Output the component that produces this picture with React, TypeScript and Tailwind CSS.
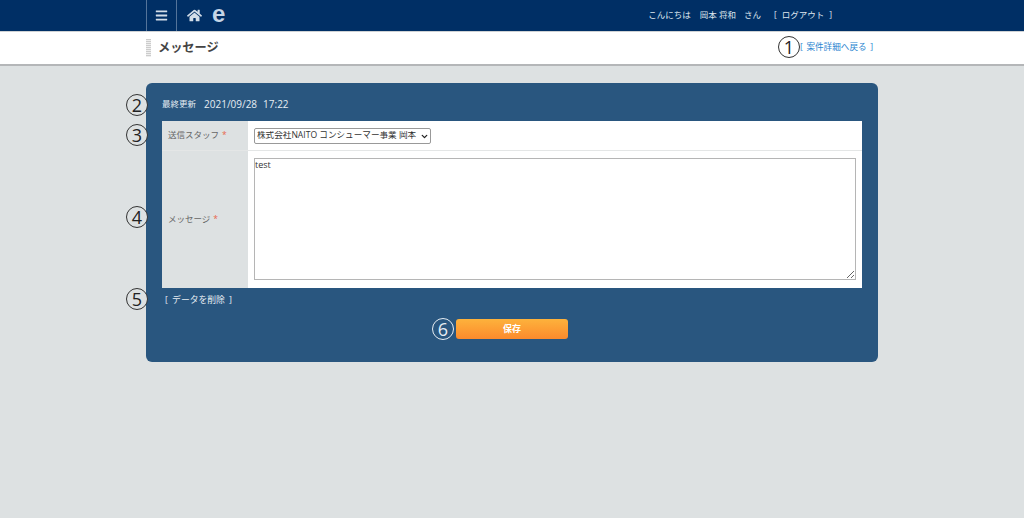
import { ChevronDown } from 'lucide-react';
import { FaBars, FaHome } from 'react-icons/fa';

const font = { fontFamily: '"Open Sans", "Noto Sans CJK JP", sans-serif' };

function Mark({ n, className }: { n: string; className: string }) {
    return (
        <span className={`absolute flex h-[22px] w-[22px] items-center justify-center rounded-full border text-[18px] leading-none ${className}`}>
            {n}
        </span>
    );
}

export default function App() {
    return (
        <div style={font} className="relative h-[518px] w-[1024px] overflow-hidden bg-[#dde1e2] font-['Open_Sans','Noto_Sans_CJK_JP',sans-serif]">
            {/* top bar */}
            <div className="h-[31px] bg-[#002f65]">
                <div className="mx-auto flex h-full w-[732px] items-center">
                    <div className="flex h-full w-[31px] items-center justify-center border-x border-[#54749a] text-[#d3dee9]">
                        <FaBars size={13} />
                    </div>
                    <FaHome size={15} className="ml-[10px] text-[#d3dee9]" />
                    <span className="ml-[10px] h-[28px] font-['Liberation_Sans',sans-serif] text-[24px] font-bold leading-[24px] text-[#c5d5e6]">e</span>
                    <div className="ml-auto mr-[46px] flex items-center text-[8.5px] text-[#dfe7ef]">
                        <span>こんにちは</span>
                        <span className="ml-[9px]">岡本 将和</span>
                        <span className="ml-[8px]">さん</span>
                        <div className="ml-[13px] flex w-[58px] justify-between">
                            <span>[</span>
                            <span>ログアウト</span>
                            <span>]</span>
                        </div>
                    </div>
                </div>
            </div>

            {/* title bar */}
            <div className="h-[35px] border-t border-b-2 border-t-[#cfd2d4] border-b-[#b4b6b8] bg-white">
                <div className="mx-auto flex h-full w-[732px] items-center">
                    <div className="h-[18px] w-[5px] bg-[repeating-linear-gradient(#ccc_0,#ccc_1px,#eee_1px,#eee_2px)]" />
                    <h1 className="ml-[7px] text-[12.2px] font-bold text-[#444]">メッセージ</h1>
                    <a className="ml-auto mr-[5px] mb-[2px] flex w-[73px] justify-between text-[8.6px] text-[#2a85d0]">
                        <span>[</span>
                        <span>案件詳細へ戻る</span>
                        <span>]</span>
                    </a>
                </div>
            </div>

            {/* panel */}
            <div className="mx-auto mt-[17px] h-[279px] w-[732px] rounded-[6px] bg-[#29567f] px-[16px] pt-[12px]">
                <div className="mb-[8px] flex h-[18px] items-center text-[8.5px] text-[#e6edf3]">
                    <span>最終更新</span>
                    <span className="ml-[8px] text-[10px]">2021/09/28</span>
                    <span className="ml-[6px] text-[10px]">17:22</span>
                </div>
                <div className="bg-white">
                    <div className="flex h-[30px] border-b border-[#e4e6e6]">
                        <div className="flex w-[86px] items-center bg-[#dde1e2] pl-[6px] text-[8.5px] text-[#666]">
                            送信スタッフ<span className="ml-[3px] text-[#e8654c]">*</span>
                        </div>
                        <div className="flex items-center pl-[6px]">
                            <div className="relative">
                                <select className="block h-[16px] w-[177px] appearance-none rounded-[2px] border border-[#999] bg-white pl-[2px] text-[8.6px] leading-none text-[#333]">
                                    <option>株式会社NAITO コンシューマー事業 岡本</option>
                                </select>
                                <ChevronDown size={9} strokeWidth={3.5} className="absolute right-[2px] top-[4px] text-[#222]" />
                            </div>
                        </div>
                    </div>
                    <div className="flex h-[137px]">
                        <div className="flex w-[86px] items-center bg-[#dde1e2] pl-[6px] text-[8.5px] text-[#666]">
                            メッセージ<span className="ml-[3px] text-[#e8654c]">*</span>
                        </div>
                        <div className="pl-[6px] pt-[7px]">
                            <textarea
                                defaultValue="test"
                                className="block h-[122px] w-[602px] border border-[#b5b5b5] px-0 text-[9px] leading-[11px] text-[#333]"
                            />
                        </div>
                    </div>
                </div>
                <p className="mt-[7px] ml-[3px] flex w-[67px] justify-between text-[8.8px] leading-[11px] text-[#e6edf3]">
                    <span>[</span>
                    <span>データを削除</span>
                    <span>]</span>
                </p>
                <button className="mx-auto mt-[13px] block h-[20px] w-[112px] rounded-[3px] bg-gradient-to-b from-[#fdb23c] to-[#fc8a2c] text-[9px] font-bold text-white">
                    保存
                </button>
            </div>

            {/* annotation numbers */}
            <Mark n="1" className="left-[778px] top-[36px] border-[#333] bg-white text-[#222]" />
            <Mark n="2" className="left-[126px] top-[94px] border-[#333] bg-[#dde1e2] text-[#222]" />
            <Mark n="3" className="left-[126px] top-[124px] border-[#333] bg-[#dde1e2] text-[#222]" />
            <Mark n="4" className="left-[126px] top-[206px] border-[#333] bg-[#dde1e2] text-[#222]" />
            <Mark n="5" className="left-[126px] top-[288px] border-[#333] bg-[#dde1e2] text-[#222]" />
            <Mark n="6" className="left-[432px] top-[318px] border-[#e6edf3] text-[#e6edf3]" />
        </div>
    );
}
